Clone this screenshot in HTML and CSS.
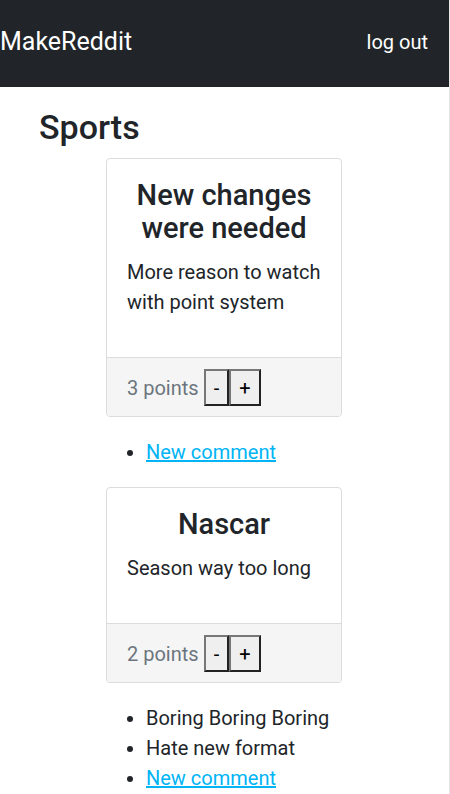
FILE: index.html
```html
<!DOCTYPE html>
<html lang="en">
<head>
<meta charset="utf-8">
<title>MakeReddit</title>
<link rel="stylesheet" href="styles.css">
</head>
<body>
<div class="page">
  <nav class="navbar">
    <a class="brand" href="#">MakeReddit</a>
    <a class="nav-link" href="#">log out</a>
  </nav>
  <main class="content">
    <h1 class="sub-title">Sports</h1>

    <div class="post">
      <div class="card">
        <div class="card-body">
          <h2 class="card-title">New changes were needed</h2>
          <p class="card-text">More reason to watch with point system</p>
        </div>
        <div class="card-footer">
          <span class="points">3 points</span><button class="vote">-</button><button class="vote">+</button>
        </div>
      </div>
      <ul class="comments">
        <li><a href="#" class="link">New comment</a></li>
      </ul>
    </div>

    <div class="post">
      <div class="card">
        <div class="card-body">
          <h2 class="card-title">Nascar</h2>
          <p class="card-text">Season way too long</p>
        </div>
        <div class="card-footer">
          <span class="points">2 points</span><button class="vote">-</button><button class="vote">+</button>
        </div>
      </div>
      <ul class="comments">
        <li>Boring Boring Boring</li>
        <li>Hate new format</li>
        <li><a href="#" class="link">New comment</a></li>
      </ul>
    </div>
  </main>
</div>
</body>
</html>
```
FILE: styles.css
```css
* { box-sizing: border-box; }
html, body { margin: 0; padding: 0; }
body {
  font-family: Roboto, "Noto Sans", sans-serif;
  color: #212529;
  background: #fff;
  font-size: 20px;
  line-height: 1.5;
}
.page {
  width: 450px;
  border-right: 1px solid #e6e6e6;
  min-height: 794px;
}
.navbar {
  height: 87px;
  background: #212529;
  display: flex;
  align-items: center;
  justify-content: space-between;
  padding: 0 21px 4px 0;
}
.brand {
  color: #fff;
  text-decoration: none;
  font-size: 25px;
}
.nav-link {
  color: #fff;
  text-decoration: none;
  font-size: 20px;
}
.content {
  padding: 0 0 0 39px;
}
.sub-title {
  margin: 19px 0 10px;
  font-size: 34px;
  font-weight: 500;
  line-height: 42px;
}
.post {
  display: flex;
  flex-direction: column;
  align-items: flex-start;
}
.card {
  margin-left: 67px;
  width: 236px;
  border: 1px solid #dcdcdc;
  border-radius: 4px;
  overflow: hidden;
}
.card-body {
  padding: 20px 20px 40px;
}
.card-title {
  margin: 0 0 12px;
  text-align: center;
  font-size: 29px;
  font-weight: 500;
  line-height: 33px;
}
.card-text {
  margin: 0;
  font-size: 20px;
  line-height: 30px;
}
.card-footer {
  background: #f5f5f5;
  border-top: 1px solid #dcdcdc;
  padding: 11px 20px 10px;
  display: flex;
  align-items: center;
}
.points {
  color: #6c757d;
  font-size: 20px;
  margin-right: 5px;
}
.vote {
  font-family: Roboto, sans-serif;
  font-size: 20px;
  line-height: 1;
  background: #efefef;
  color: #000;
  border: 2px solid;
  border-color: #777 #222 #222 #777;
  height: 37px;
  padding: 0 8px;
  margin: 0;
}
.comments {
  margin: 20px 0 20px;
  padding-left: 107px;
  line-height: 30px;
}
.link {
  color: #00b4f5;
  text-decoration: underline;
}
```
